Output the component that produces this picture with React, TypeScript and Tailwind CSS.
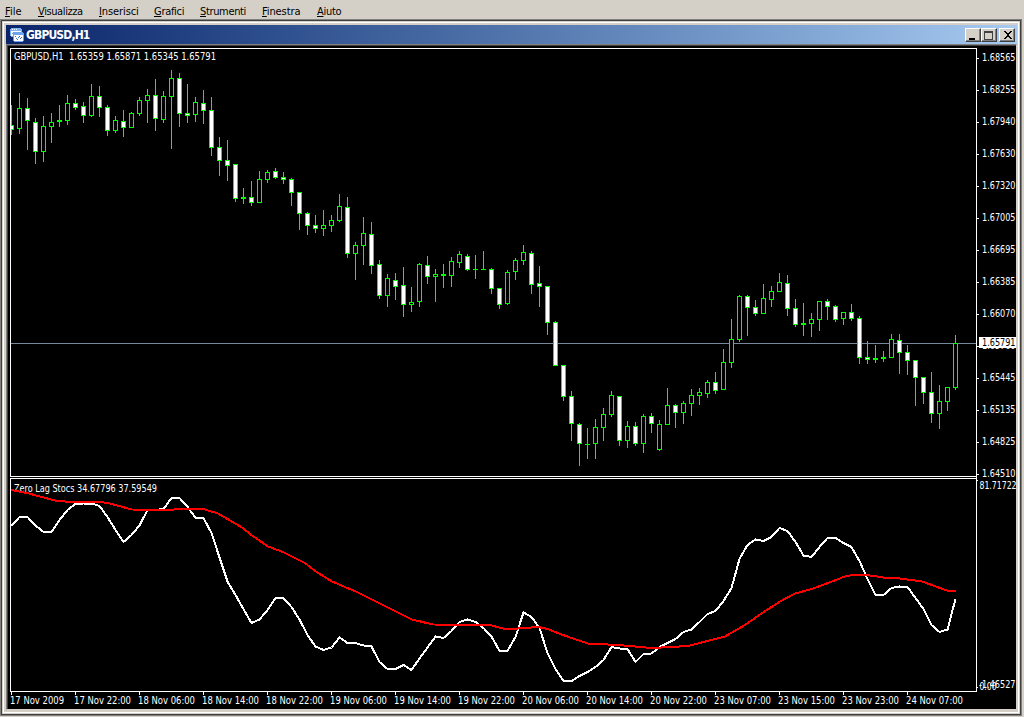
type Candle = [high: number, top: number, bottom: number, low: number, bearish: 0 | 1];

const menuItems = [
  { label: 'File', width: 'w-[33px]', tracking: 'tracking-[0px]' },
  { label: 'Visualizza', width: 'w-[61px]', tracking: 'tracking-[-0.4px]' },
  { label: 'Inserisci', width: 'w-[55px]', tracking: 'tracking-[-0.1px]' },
  { label: 'Grafici', width: 'w-[46px]', tracking: 'tracking-[-0.3px]' },
  { label: 'Strumenti', width: 'w-[62px]', tracking: 'tracking-[-0.35px]' },
  { label: 'Finestra', width: 'w-[55px]', tracking: 'tracking-[-0.1px]' },
  { label: 'Aiuto', width: 'w-[40px]', tracking: 'tracking-[-0.3px]' },
];

// one entry per hour, in chart pixels
const candles: Candle[] = [
  [105, 125, 130, 135, 1], [93, 108, 129, 134, 0], [98, 108, 121, 150, 1], [118, 122, 152, 164, 1],
  [116, 126, 152, 162, 0], [113, 122, 127, 143, 0], [105, 120, 122, 127, 0], [95, 103, 121, 125, 0],
  [99, 103, 108, 110, 1], [102, 106, 116, 123, 1], [84, 96, 116, 117, 0], [86, 96, 108, 117, 1],
  [105, 107, 131, 136, 1], [116, 120, 131, 133, 0], [110, 121, 128, 137, 1], [112, 113, 128, 128, 0],
  [97, 100, 114, 116, 0], [89, 95, 101, 123, 0], [79, 95, 119, 131, 1], [91, 96, 120, 123, 0],
  [70, 78, 97, 149, 0], [73, 78, 114, 127, 1], [84, 113, 116, 123, 1], [97, 102, 115, 122, 0],
  [90, 103, 111, 124, 1], [97, 110, 148, 156, 1], [137, 147, 161, 176, 1], [140, 160, 166, 181, 1],
  [164, 164, 199, 202, 1], [188, 197, 199, 204, 0], [181, 197, 203, 206, 1], [171, 179, 203, 203, 0],
  [170, 172, 180, 183, 0], [168, 171, 178, 179, 1], [172, 177, 180, 184, 1], [178, 179, 193, 206, 1],
  [192, 192, 214, 230, 1], [212, 213, 226, 235, 1], [215, 225, 229, 233, 1], [210, 225, 229, 236, 0],
  [215, 220, 226, 232, 0], [194, 206, 221, 222, 0], [197, 207, 254, 258, 1], [242, 245, 254, 280, 0],
  [217, 233, 246, 265, 0], [222, 234, 266, 274, 1], [260, 264, 296, 299, 1], [274, 278, 296, 307, 0],
  [273, 280, 287, 300, 1], [267, 285, 305, 317, 1], [287, 302, 305, 312, 0], [263, 264, 302, 307, 0],
  [256, 265, 277, 284, 1], [269, 274, 277, 302, 0], [264, 274, 276, 288, 0], [257, 261, 276, 287, 0],
  [251, 254, 263, 268, 0], [254, 256, 270, 271, 1], [255, 269, 270, 279, 0], [251, 269, 270, 270, 0],
  [268, 269, 289, 294, 1], [288, 288, 305, 309, 1], [270, 272, 304, 305, 0], [258, 260, 272, 280, 0],
  [245, 252, 261, 265, 0], [251, 253, 285, 294, 1], [266, 283, 287, 307, 1], [286, 286, 323, 335, 1],
  [321, 322, 366, 366, 1], [365, 365, 397, 401, 1], [391, 396, 424, 441, 1], [423, 424, 444, 466, 1],
  [428, 444, 445, 459, 0], [419, 427, 444, 459, 0], [408, 414, 428, 441, 0], [391, 395, 415, 417, 0],
  [396, 396, 441, 446, 1], [421, 426, 441, 448, 0], [422, 426, 444, 446, 1], [414, 416, 444, 453, 0],
  [413, 416, 424, 433, 1], [420, 424, 450, 451, 0], [388, 405, 425, 425, 0], [404, 405, 413, 428, 1],
  [401, 403, 413, 424, 0], [389, 395, 404, 416, 0], [388, 392, 396, 405, 0], [380, 382, 394, 398, 0],
  [372, 382, 391, 394, 1], [349, 362, 390, 390, 0], [319, 339, 363, 368, 0], [295, 296, 340, 342, 0],
  [295, 296, 308, 336, 1], [300, 307, 314, 316, 1], [284, 298, 314, 314, 0], [286, 291, 300, 307, 0],
  [273, 282, 292, 292, 0], [275, 283, 309, 316, 1], [299, 308, 325, 327, 1], [303, 323, 325, 336, 0],
  [313, 319, 324, 337, 0], [301, 301, 320, 331, 0], [299, 301, 307, 320, 1], [305, 306, 320, 322, 1],
  [312, 312, 319, 325, 0], [304, 312, 319, 321, 1], [316, 318, 358, 364, 1], [341, 357, 360, 364, 1],
  [345, 358, 360, 363, 0], [351, 357, 359, 362, 0], [334, 339, 358, 358, 0], [334, 340, 353, 374, 1],
  [345, 352, 361, 375, 1], [360, 360, 378, 406, 1], [377, 377, 393, 404, 1], [372, 392, 414, 423, 1],
  [385, 401, 414, 429, 0], [387, 387, 402, 411, 0], [335, 343, 388, 390, 0],
];

const stochastic = [
  526, 517, 517, 525.5, 532, 532, 520, 510, 504, 503.5, 503.5, 506, 517, 530, 542, 535, 525.5, 510, 510, 509,
  498, 498, 506.5, 518, 518, 533, 557.5, 581.5, 595, 609, 623, 619.5, 610, 598, 598, 607, 619.5, 635, 646.5, 650,
  647.5, 637.5, 643, 643, 645.5, 646.5, 662, 669, 669, 665, 670, 658.5, 647.5, 636.5, 638, 631, 622, 619.5, 622, 628,
  636.5, 651, 651, 637, 612.5, 617, 628, 653, 669, 681, 681, 676, 672, 667, 660, 647, 648.5, 649, 662, 654,
  653.5, 647, 643, 639, 632, 629.5, 622, 614, 611, 601, 588, 559, 545, 539.5, 541, 537, 528, 531, 542, 555.5,
  557, 547, 538, 538, 543, 547, 561, 579, 595, 595, 588, 586.5, 587, 598, 609, 625, 632, 629.5, 599,
];

const signal =
  '11,490 27,493 55,500.5 70,502 100,502 108,503 132,509.5 170,510 183,508.5 203,509 218,513.5 242,527.5 ' +
  '250,534 268,546.5 283,552 305,563 315,571 332,581.5 357,592 365,596 395,611 412,619.5 433,624.5 490,625 ' +
  '503,628.5 518,628.5 538,627 548,629 560,634 588,643.5 618,645 652,648 688,646 725,636.5 745,625 760,614.5 ' +
  '780,601.5 795,593.5 812,589 845,576.5 853,575 867,575 883,577.5 900,578.5 922,581.5 947,590.5 956,590.5';

const prices = [
  '1.68565', '1.68255', '1.67940', '1.67630', '1.67320', '1.67005', '1.66695',
  '1.66385', '1.66070', '1.65760', '1.65445', '1.65135', '1.64825', '1.64510',
];

const times = [
  '17 Nov 2009', '17 Nov 22:00', '18 Nov 06:00', '18 Nov 14:00', '18 Nov 22:00',
  '19 Nov 06:00', '19 Nov 14:00', '19 Nov 22:00', '20 Nov 06:00', '20 Nov 14:00',
  '20 Nov 22:00', '23 Nov 07:00', '23 Nov 15:00', '23 Nov 23:00', '24 Nov 07:00',
];

const barX = (i: number) => 11 + i * 8;

function Label({ x, y, width, children, fill = '#fff' }: {
  x: number;
  y: number;
  width: number;
  children: string;
  fill?: string;
}) {
  return (
    <text x={x} y={y} textLength={width} lengthAdjust="spacingAndGlyphs" fill={fill} xmlSpace="preserve">
      {children}
    </text>
  );
}

function CandleBar({ x, candle }: { x: number; candle: Candle }) {
  const [high, top, bottom, low, bearish] = candle;
  return (
    <g>
      <rect x={x} y={high} width={1} height={low - high} fill="#00ff00" />
      <rect x={x - 2} y={top} width={5} height={bottom - top} fill="#00ff00" />
      {bottom - top > 2 && (
        <rect x={x - 1} y={top + 1} width={3} height={bottom - top - 2} fill={bearish ? '#fff' : '#000'} />
      )}
    </g>
  );
}

function Chart() {
  return (
    <svg
      viewBox="8 46 1008 663"
      className="block h-[663px] w-[1008px] bg-black text-[10px] [font-family:'DejaVu_Sans_Condensed','DejaVu_Sans',sans-serif]"
      shapeRendering="crispEdges"
    >
      <defs>
        <clipPath id="plot">
          <rect x={11} y={49} width={965} height={642} />
        </clipPath>
      </defs>

      {/* pane borders */}
      <path d="M976.5 476.5H10.5V48.5H976.5V476M976.5 478.5H10.5V691.5H976.5V478" fill="none" stroke="#fff" />
      <rect x={976} y={476} width={1} height={3} fill="#fff" />

      {/* price pane */}
      <rect x={11} y={343} width={965} height={1} fill="#778899" />
      <g clipPath="url(#plot)">
        {candles.map((candle, i) => (
          <CandleBar key={i} x={barX(i)} candle={candle} />
        ))}
      </g>
      <Label x={14} y={60} width={202}>GBPUSD,H1  1.65359 1.65871 1.65345 1.65791</Label>

      {/* indicator pane */}
      <Label x={14} y={492} width={143}>Zero Lag Stocs 34.67796 37.59549</Label>
      <g clipPath="url(#plot)" fill="none" strokeWidth={2} strokeLinejoin="round">
        <polyline points={stochastic.map((y, i) => `${barX(i) + 0.5},${y}`).join(' ')} stroke="#fff" />
        <polyline points={signal} stroke="#ff0000" />
      </g>

      {/* price axis */}
      {prices.map((price, i) => (
        <g key={price}>
          <rect x={977} y={58 + i * 32} width={2} height={1} fill="#fff" />
          <Label x={982} y={61 + i * 32} width={33.5}>{price}</Label>
        </g>
      ))}
      <rect x={979} y={337} width={37} height={11} fill="#fff" />
      <Label x={982} y={346} width={33.5} fill="#000">1.65791</Label>
      <rect x={977} y={480} width={1} height={1} fill="#fff" />
      <Label x={979.5} y={489} width={37}>81.71722</Label>
      <rect x={977} y={687} width={1} height={1} fill="#fff" />
      <Label x={979.5} y={690} width={17}>0.00</Label>
      <Label x={979} y={688} width={36.5}>-1.46527</Label>

      {/* time axis */}
      {times.map((time, i) => (
        <g key={time}>
          <rect x={11 + i * 64} y={692} width={1} height={3} fill="#fff" />
          <Label x={10 + i * 64} y={704} width={i === 0 ? 54 : 57}>{time}</Label>
        </g>
      ))}
    </svg>
  );
}

function ChartIcon() {
  return (
    <svg viewBox="0 0 14 14" className="h-[14px] w-[14px]" shapeRendering="crispEdges">
      <path d="M1 0h10v1h1v8H1V8H0V1h1z" fill="#7db2f5" />
      <rect x={1} y={3} width={10} height={5} fill="#fff" />
      <path d="M2 1.5h1M4 1.5h1M6 1.5h1" stroke="#fff" />
      <path d="M2 5.5h1M3 4.5h1M4 5.5h1" stroke="#5b9bea" />
      <path d="M4 4h9v1h1v8h-1v1H4v-1H3V5h1z" fill="#6ba5ef" />
      <rect x={4} y={7} width={9} height={6} fill="#fff" />
      <path d="M5 8.5h1M6 10h1M7 11.5h1M8 9.5h1M9 8.5h1M10 10.5h1M11 9.5h1" stroke="#3a78cc" />
    </svg>
  );
}

function TitleButton({ d, fill = '#000', className = '' }: { d: string; fill?: string; className?: string }) {
  return (
    <button className={`h-[14px] w-[16px] border border-t-white border-r-[#404040] border-b-[#404040] border-l-white bg-[#d4d0c8] shadow-[inset_-1px_-1px_0_#808080] ${className}`}>
      <svg viewBox="0 0 14 12" className="block h-[12px] w-[14px]" shapeRendering="crispEdges">
        <path d={d} fill={fill} fillRule="evenodd" />
      </svg>
    </button>
  );
}

export default function App() {
  return (
    <div className="flex h-[717px] w-[1024px] flex-col overflow-hidden bg-[#d4d0c8] [font-family:'DejaVu_Sans_Condensed','DejaVu_Sans',sans-serif]">
      <nav className="flex h-[19px] shrink-0 pt-[5px] pl-[5px] text-[11px] leading-[14px] text-black">
        {menuItems.map((item) => (
          <span key={item.label} className={`${item.width} ${item.tracking}`}>
            <span className="underline underline-offset-1">{item.label[0]}</span>
            {item.label.slice(1)}
          </span>
        ))}
      </nav>

      <div className="mr-[2px] mb-[2px] flex-1 border border-[#808080]">
        <div className="h-full border border-[#404040] p-px">
          <div className="h-full border border-white p-[2px] pr-px">
            <header className="flex h-[19px] items-center bg-linear-to-r from-[#0a246a] to-[#a6caf0] pr-[2px] pl-[4px]">
              <ChartIcon />
              <span className="mt-px ml-[2px] text-[12px] leading-[14px] font-bold tracking-[-0.85px] text-white">GBPUSD,H1</span>
              <div className="ml-auto flex">
                <TitleButton d="M3 9h6v2H3z" />
                <TitleButton d="M2 2h9v9H2zM3 4v6h7V4z" fill="#404040" />
                <TitleButton
                  className="ml-[2px]"
                  d="M4 2h2v1h1v1h2V3h1V2h2v1h-1v1h-1v1H9v2h1v1h1v1h1v1h-2V9H9V8H7v1H6v1H4V9h1V8h1V7h1V5H6V4H5V3H4z"
                />
              </div>
            </header>
            <div className="w-fit border border-t-[#808080] border-r-[#d4d0c8] border-b-[#d4d0c8] border-l-[#808080]">
              <div className="border-t border-l border-[#404040]">
                <Chart />
              </div>
            </div>
          </div>
        </div>
      </div>
    </div>
  );
}
